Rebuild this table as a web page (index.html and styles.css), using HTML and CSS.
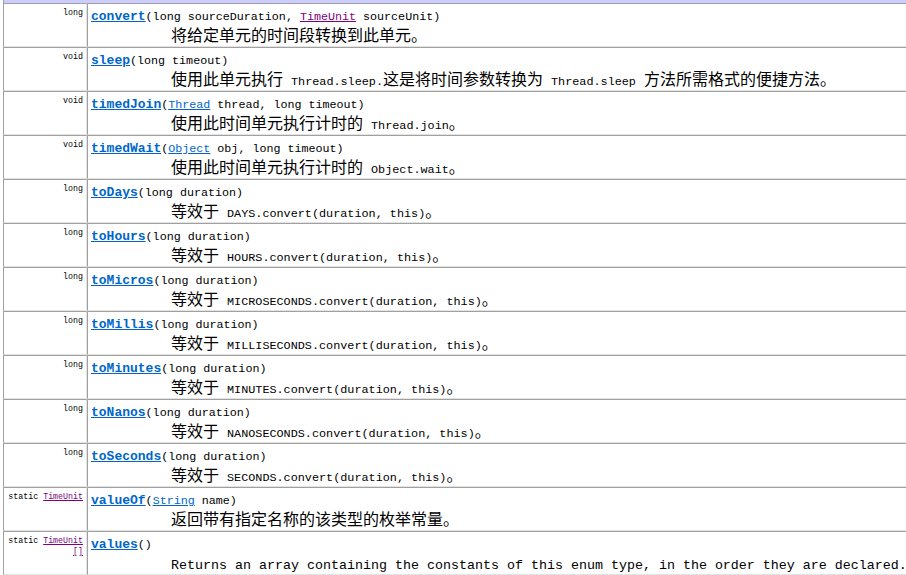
FILE: index.html
```html
<!DOCTYPE html>
<html>
<head>
<meta charset="utf-8">
<title>TimeUnit Method Summary</title>
<link rel="stylesheet" href="styles.css">
</head>
<body>
<table class="summary">
  <colgroup><col class="c-type"><col class="c-member"></colgroup>
  <tr class="head"><th colspan="2"></th></tr>
  <tr>
    <td class="type">long</td>
    <td class="member">
      <div class="sig"><a class="name" href="#">convert</a>(long sourceDuration, <a class="visited" href="#">TimeUnit</a> sourceUnit)</div>
      <div class="desc">将给定单元的时间段转换到此单元。</div>
    </td>
  </tr>
  <tr>
    <td class="type">void</td>
    <td class="member">
      <div class="sig"><a class="name" href="#">sleep</a>(long timeout)</div>
      <div class="desc">使用此单元执行 <code>Thread.sleep.</code>这是将时间参数转换为 <code>Thread.sleep</code> 方法所需格式的便捷方法。</div>
    </td>
  </tr>
  <tr>
    <td class="type">void</td>
    <td class="member">
      <div class="sig"><a class="name" href="#">timedJoin</a>(<a href="#">Thread</a> thread, long timeout)</div>
      <div class="desc">使用此时间单元执行计时的 <code>Thread.join</code>。</div>
    </td>
  </tr>
  <tr>
    <td class="type">void</td>
    <td class="member">
      <div class="sig"><a class="name" href="#">timedWait</a>(<a href="#">Object</a> obj, long timeout)</div>
      <div class="desc">使用此时间单元执行计时的 <code>Object.wait</code>。</div>
    </td>
  </tr>
  <tr>
    <td class="type">long</td>
    <td class="member">
      <div class="sig"><a class="name" href="#">toDays</a>(long duration)</div>
      <div class="desc">等效于 <code>DAYS.convert(duration, this)</code>。</div>
    </td>
  </tr>
  <tr>
    <td class="type">long</td>
    <td class="member">
      <div class="sig"><a class="name" href="#">toHours</a>(long duration)</div>
      <div class="desc">等效于 <code>HOURS.convert(duration, this)</code>。</div>
    </td>
  </tr>
  <tr>
    <td class="type">long</td>
    <td class="member">
      <div class="sig"><a class="name" href="#">toMicros</a>(long duration)</div>
      <div class="desc">等效于 <code>MICROSECONDS.convert(duration, this)</code>。</div>
    </td>
  </tr>
  <tr>
    <td class="type">long</td>
    <td class="member">
      <div class="sig"><a class="name" href="#">toMillis</a>(long duration)</div>
      <div class="desc">等效于 <code>MILLISECONDS.convert(duration, this)</code>。</div>
    </td>
  </tr>
  <tr>
    <td class="type">long</td>
    <td class="member">
      <div class="sig"><a class="name" href="#">toMinutes</a>(long duration)</div>
      <div class="desc">等效于 <code>MINUTES.convert(duration, this)</code>。</div>
    </td>
  </tr>
  <tr>
    <td class="type">long</td>
    <td class="member">
      <div class="sig"><a class="name" href="#">toNanos</a>(long duration)</div>
      <div class="desc">等效于 <code>NANOSECONDS.convert(duration, this)</code>。</div>
    </td>
  </tr>
  <tr>
    <td class="type">long</td>
    <td class="member">
      <div class="sig"><a class="name" href="#">toSeconds</a>(long duration)</div>
      <div class="desc">等效于 <code>SECONDS.convert(duration, this)</code>。</div>
    </td>
  </tr>
  <tr>
    <td class="type">static <a class="visited" href="#">TimeUnit</a></td>
    <td class="member">
      <div class="sig"><a class="name" href="#">valueOf</a>(<a href="#">String</a> name)</div>
      <div class="desc">返回带有指定名称的该类型的枚举常量。</div>
    </td>
  </tr>
  <tr>
    <td class="type">static <a class="visited" href="#">TimeUnit</a><br><a class="visited" href="#">[]</a></td>
    <td class="member">
      <div class="sig"><a class="name" href="#">values</a>()</div>
      <div class="desc"><span class="en">Returns an array containing the constants of this enum type, in the order they are declared.</span></div>
    </td>
  </tr>
</table>
</body>
</html>
```

FILE: styles.css
```css
html, body {
  margin: 0;
  padding: 0;
  overflow: hidden;
  background: #ffffff;
  color: #000000;
}

.summary {
  border-collapse: separate;
  border-spacing: 0;
  margin-left: 3px;
  width: 930px;
  table-layout: fixed;
}

.c-type {
  width: 84px;
}

.head th {
  height: 3px;
  padding: 0;
  background: #ccccff;
  border-left: 1px solid #a0a0a0;
}

.summary td {
  box-sizing: border-box;
  height: 44px;
  padding: 3px;
  vertical-align: top;
  border-top: 1px solid #a0a0a0;
  border-left: 1px solid #a0a0a0;
  border-right: 1px solid #e3e3e3;
  border-bottom: 1px solid #e3e3e3;
}

.summary td.type {
  text-align: right;
  font-family: "Liberation Mono", monospace;
  font-size: 8.3px;
  line-height: 11px;
  padding-top: 3px;
  padding-left: 0;
  white-space: nowrap;
}

a {
  color: #0066cc;
  text-decoration: underline;
}

a.visited {
  color: #800080;
}

.sig {
  height: 18px;
  padding-top: 1px;
  font-family: "Liberation Mono", monospace;
  font-size: 11.7px;
  line-height: 18px;
  white-space: nowrap;
}

.sig .name {
  font-weight: bold;
  font-size: 13px;
}

.desc {
  height: 16px;
  padding-left: 80px;
  font-family: "Noto Sans CJK SC", sans-serif;
  font-size: 16px;
  line-height: 16px;
  word-spacing: 4.4px;
  white-space: nowrap;
}

.desc code {
  font-family: "Liberation Mono", monospace;
  font-size: 11.8px;
  word-spacing: 0;
}

.desc .en {
  font-family: "Liberation Mono", monospace;
  font-size: 13.33px;
  word-spacing: 0;
}
```
